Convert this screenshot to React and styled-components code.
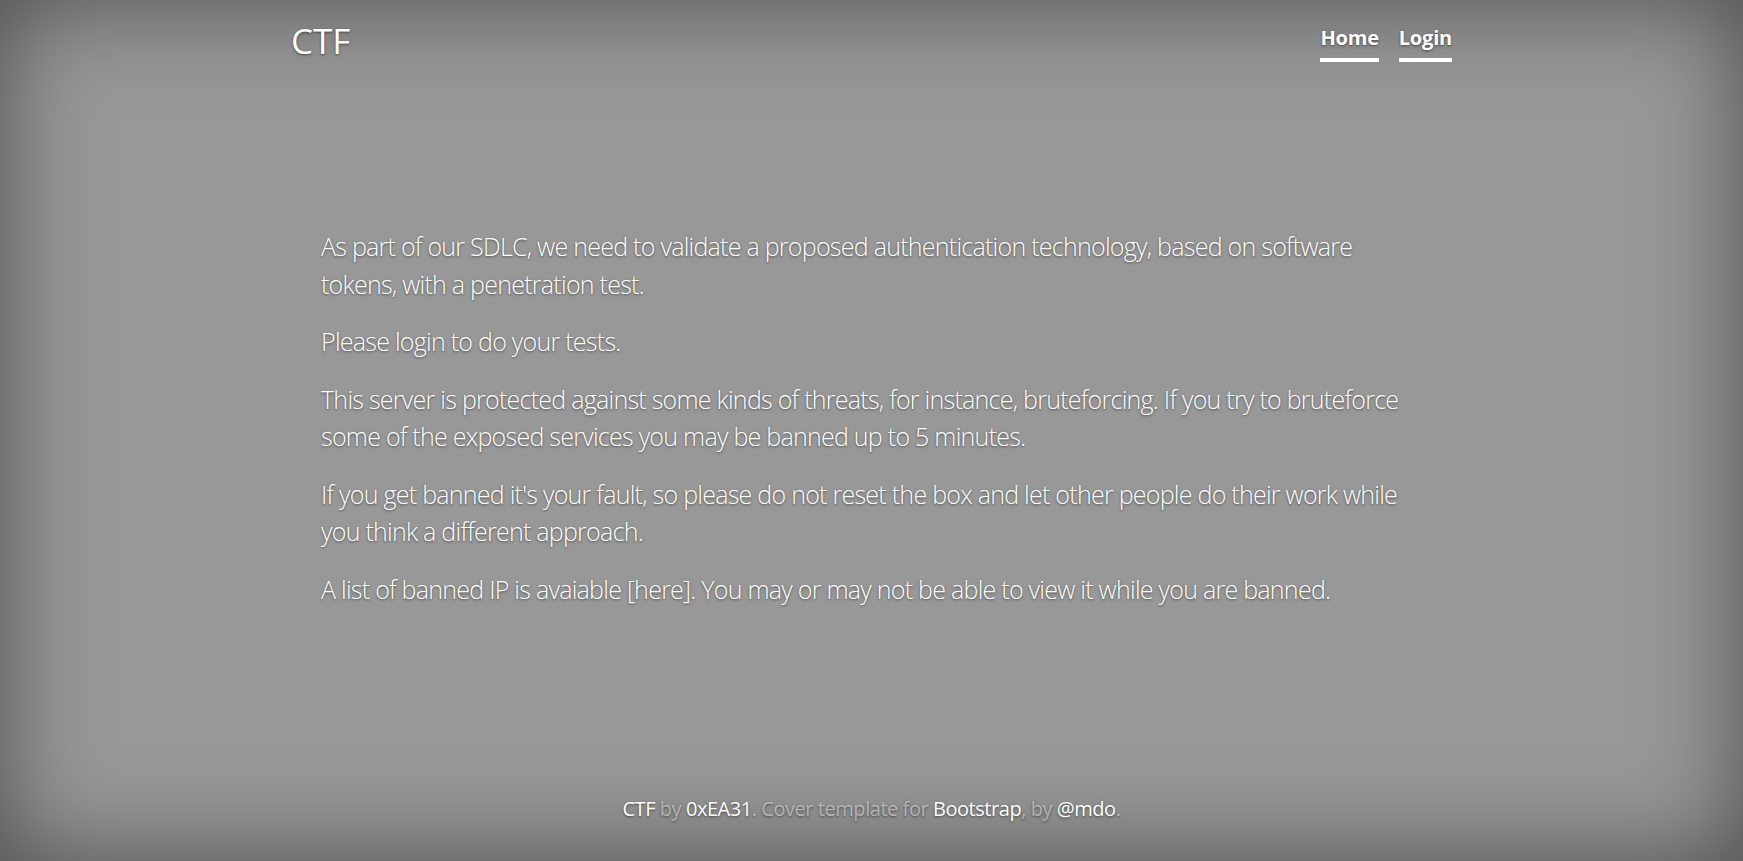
import React from "react";
import styled, { createGlobalStyle } from "styled-components";

const GlobalStyle = createGlobalStyle`
  html, body, #root {
    height: 100%;
  }
  body {
    margin: 0;
    font-family: "Open Sans", "Liberation Sans", sans-serif;
    font-size: 20px;
    line-height: 1.5;
    color: #fff;
    background-color: #989898;
    text-shadow: 0 1.25px 2.5px rgba(0, 0, 0, 0.5);
    box-shadow: inset 0 0 100px rgba(0, 0, 0, 0.5);
  }
`;

const Cover = styled.div`
  display: flex;
  flex-direction: column;
  box-sizing: border-box;
  height: 100%;
  width: 100%;
  max-width: 1201px;
  margin: 0 auto;
  padding: 20px;
`;

const Masthead = styled.header`
  display: flex;
  justify-content: space-between;
  align-items: flex-start;
`;

const Brand = styled.h3`
  margin: 0;
  font-size: 35px;
  font-weight: 400;
  line-height: 1.2;
`;

const Nav = styled.nav`
  display: flex;
  gap: 20px;
`;

const NavLink = styled.a`
  padding: 3px 0 5px;
  font-weight: 700;
  color: #fff;
  text-decoration: none;
  line-height: 30px;
  letter-spacing: -0.2px;
  border-bottom: 4px solid ${(p) => (p.$active ? "#fff" : "transparent")};
`;

const Inner = styled.main`
  margin: auto 0;
  padding: 83px 30px 0;
`;

const Lead = styled.p`
  margin: 0 0 20px;
  font-size: 25px;
  font-weight: 300;
  line-height: 1.5;
  letter-spacing: -0.74px;
`;

const Footer = styled.footer`
  margin-top: auto;
  text-align: center;
  color: rgba(255, 255, 255, 0.5);
`;

const FootText = styled.p`
  margin: 0 0 17px;
  letter-spacing: -0.45px;
`;

const FootLink = styled.a`
  color: #fff;
  text-decoration: none;
`;

export default function App() {
  return (
    <>
      <GlobalStyle />
      <Cover>
        <Masthead>
          <Brand>CTF</Brand>
          <Nav>
            <NavLink href="#" $active>Home</NavLink>
            <NavLink href="#" $active>Login</NavLink>
          </Nav>
        </Masthead>

        <Inner>
          <Lead>
            As part of our SDLC, we need to validate a proposed authentication
            technology, based on software tokens, with a penetration test.
          </Lead>
          <Lead>Please login to do your tests.</Lead>
          <Lead>
            This server is protected against some kinds of threats, for
            instance, bruteforcing. If you try to bruteforce some of the exposed
            services you may be banned up to 5 minutes.
          </Lead>
          <Lead>
            If you get banned it's your fault, so please do not reset the box
            and let other people do their work while you think a different
            approach.
          </Lead>
          <Lead>
            A list of banned IP is avaiable [here]. You may or may not be able
            to view it while you are banned.
          </Lead>
        </Inner>

        <Footer>
          <FootText>
            <FootLink href="#">CTF</FootLink> by{" "}
            <FootLink href="#">0xEA31</FootLink>. Cover template for{" "}
            <FootLink href="#">Bootstrap</FootLink>, by{" "}
            <FootLink href="#">@mdo</FootLink>.
          </FootText>
        </Footer>
      </Cover>
    </>
  );
}
